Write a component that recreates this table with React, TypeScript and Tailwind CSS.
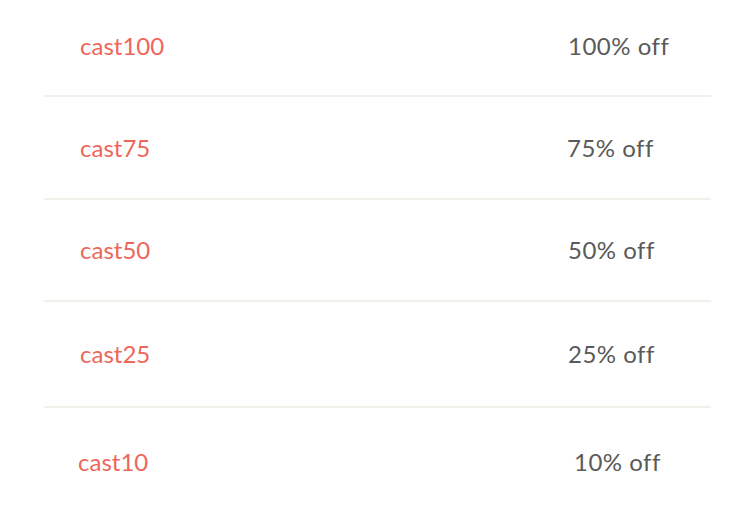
const codes = [
  { code: 'cast100', off: '100% off', h: 'h-[97px] pb-1', left: 'pl-9', right: 'pl-[524px]' },
  { code: 'cast75', off: '75% off', h: 'h-[103px]', left: 'pl-9', right: 'pl-[523px]' },
  { code: 'cast50', off: '50% off', h: 'h-[102px]', left: 'pl-9', right: 'pl-[524px]' },
  { code: 'cast25', off: '25% off', h: 'h-[106px]', left: 'pl-9', right: 'pl-[524px]' },
  { code: 'cast10', off: '10% off', h: 'h-[108px]', left: 'pl-[34px]', right: 'pl-[530px]' },
];

export default function App() {
  return (
    <div className="w-[732px] h-[514px] bg-white overflow-hidden font-['Lato',sans-serif]">
      <div className="ml-11 mr-[21px]">
        {codes.map((c, i) => (
          <div
            key={c.code}
            className={`flex items-center ${c.h} ${i < codes.length - 1 ? 'border-b-2 border-[#f1f0eb]' : ''}`}
          >
            <div className="w-0 relative">
              <span className={`block whitespace-nowrap text-[24px] text-[#ee665a] ${c.left}`}>{c.code}</span>
            </div>
            <span className={`whitespace-nowrap text-[24px] tracking-[0.5px] text-[#5a5a5a] ${c.right}`}>{c.off}</span>
          </div>
        ))}
      </div>
    </div>
  );
}
